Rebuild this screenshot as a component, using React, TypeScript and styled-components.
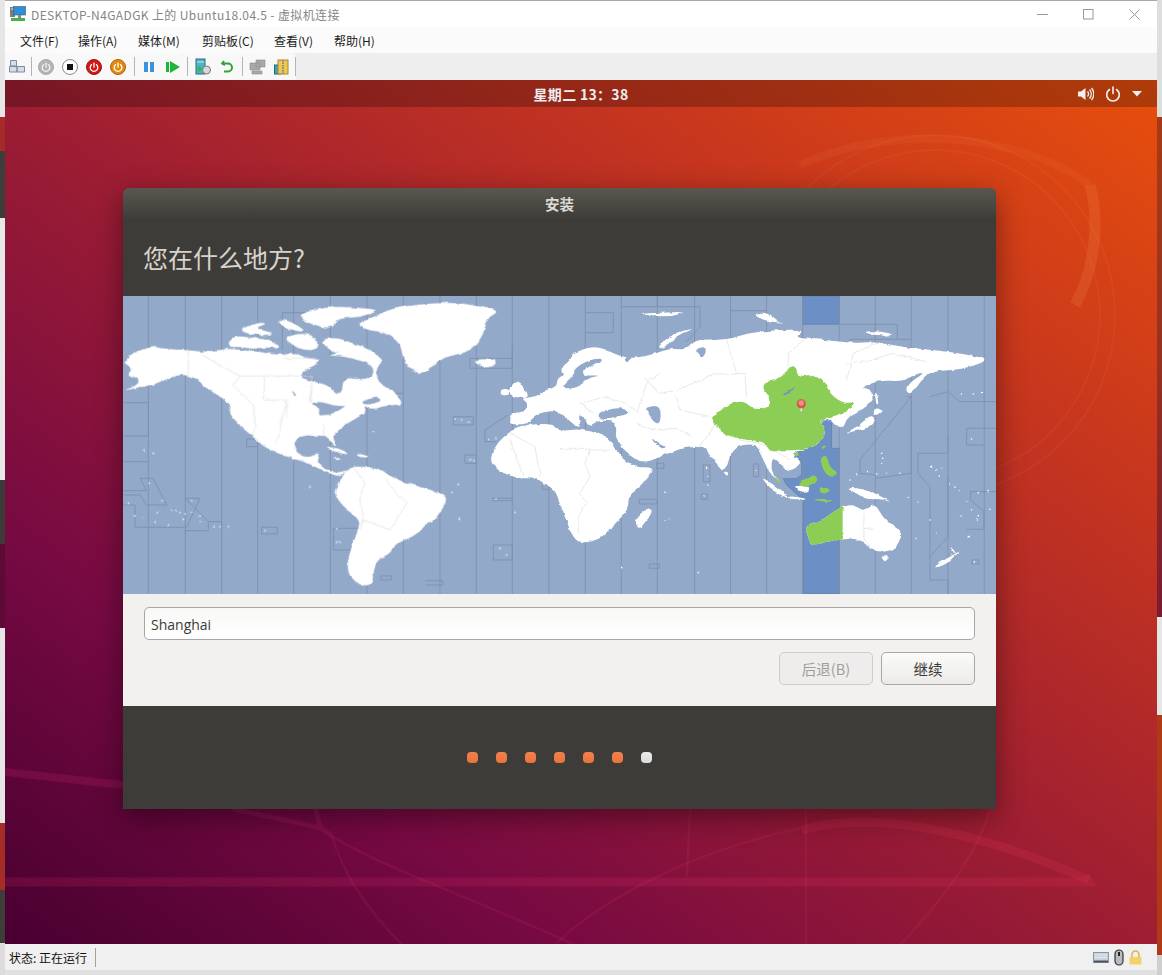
import React from "react";
import styled, { createGlobalStyle } from "styled-components";

const CJK = `"Noto Sans CJK SC", "Noto Sans", sans-serif`;

const GlobalStyle = createGlobalStyle`
  html, body { margin: 0; padding: 0; background: #e4e4e4; }
  body { font-family: ${CJK}; overflow: hidden; }
  * { box-sizing: border-box; }
`;

const Page = styled.div`
  display: grid;
  grid-template-columns: 5px 1fr 5px;
  width: 1162px;
  height: 975px;
`;

const Strip = styled.div`
  display: flex;
  flex-direction: column;
`;

const StripPart = styled.div<{ $h: number; $bg: string }>`
  flex: ${({ $h }) => ($h ? `0 0 ${$h}px` : "1")};
  background: ${({ $bg }) => $bg};
`;

const Main = styled.div`
  display: flex;
  flex-direction: column;
  min-width: 0;
`;

// host window chrome
const TitleBar = styled.div`
  height: 27px;
  background: #fff;
  border-top: 1px solid #a8a8a8;
  display: flex;
  align-items: center;
  padding-left: 5px;
  gap: 5px;
`;

const TitleText = styled.span`
  font-size: 12px;
  letter-spacing: 0.38px;
  color: #858585;
  flex: 1;
  white-space: pre;
`;

const WinButtons = styled.div`
  display: flex;
  height: 100%;
`;

const WinButton = styled.div`
  width: 46px;
  display: flex;
  align-items: center;
  justify-content: center;
  margin-top: 1px;
`;

const MenuBar = styled.div`
  height: 26px;
  background: #fbfbfb;
  display: grid;
  grid-template-columns: 58px 60px 64px 72px 60px auto;
  align-items: center;
  justify-content: start;
  padding-left: 15px;
  font-size: 12px;
  color: #1a1a1a;
`;

const ToolBar = styled.div`
  height: 27px;
  background: #eeeeee;
`;

const ToolGroup = styled.div`
  display: inline-flex;
  align-items: center;
  height: 27px;
  width: 291px;
  background: #f8f8f8;
  border-radius: 0 4px 0 0;
`;

const ToolIcon = styled.div<{ $w?: number }>`
  width: ${({ $w }) => $w ?? 24}px;
  height: 20px;
  display: flex;
  align-items: center;
  justify-content: center;
  flex: none;
`;

const ToolSep = styled.div<{ $ml?: number }>`
  width: 1px;
  height: 19px;
  background: #b4b4b4;
  margin: 0 2px 0 ${({ $ml }) => $ml ?? 2}px;
  flex: none;
`;

// guest screen
const Guest = styled.div`
  position: relative;
  flex: 1;
  display: flex;
  flex-direction: column;
  overflow: hidden;
  background: linear-gradient(to bottom left, #e84f0c 0%, #c5351f 25%, #9e1e32 50%, #770a42 76%, #480030 100%);
`;

const Wallpaper = styled.svg`
  position: absolute;
  inset: 0;
  width: 100%;
  height: 100%;
`;

const TopPanel = styled.div`
  position: relative;
  height: 27px;
  flex: none;
  background: rgba(0, 0, 0, 0.24);
  display: flex;
  align-items: center;
  justify-content: center;
  color: #eee;
  font-size: 14px;
  font-weight: 700;
  letter-spacing: 0.3px;
`;

const PanelIcons = styled.div`
  position: absolute;
  right: 15px;
  top: 0;
  height: 27px;
  display: flex;
  align-items: center;
  gap: 11px;
`;

const Desktop = styled.div`
  position: relative;
  flex: 1;
  padding: 81px 0 0 118px;
`;

const Installer = styled.div`
  width: 873px;
  height: 621px;
  border-radius: 6px 6px 0 0;
  overflow: hidden;
  display: flex;
  flex-direction: column;
  box-shadow: 0 8px 28px rgba(0, 0, 0, 0.42);
  background: #3e3c38;
`;

const InstallerTitle = styled.div`
  height: 30px;
  flex: none;
  background: linear-gradient(#5a5750, #3f3d39);
  color: #dedbd5;
  font-size: 14.5px;
  font-weight: 700;
  display: flex;
  align-items: center;
  justify-content: center;
`;

const Heading = styled.div`
  height: 78px;
  flex: none;
  padding-left: 20px;
  display: flex;
  align-items: center;
  color: #d6d3cc;
  font-size: 25px;
`;

const MapSvg = styled.svg`
  display: block;
  width: 873px;
  height: 298px;
  flex: none;
`;

const FormArea = styled.div`
  height: 112px;
  flex: none;
  background: #f2f1ef;
  padding: 13px 21px 0;
  display: flex;
  flex-direction: column;
  gap: 12px;
`;

const CityInput = styled.div`
  height: 33px;
  border: 1px solid #a9a7a2;
  border-radius: 5px;
  background: linear-gradient(#f8f8f7, #ffffff);
  display: flex;
  align-items: center;
  padding: 1px 0 0 6px;
  font-family: "Open Sans", "Noto Sans", sans-serif;
  font-size: 14px;
  color: #3c3b37;
`;

const ButtonRow = styled.div`
  display: flex;
  justify-content: flex-end;
  gap: 8px;
`;

const DialogButton = styled.div<{ $disabled?: boolean }>`
  width: 94px;
  height: 33px;
  border-radius: 5px;
  display: flex;
  align-items: center;
  justify-content: center;
  font-size: 14.5px;
  border: 1px solid ${({ $disabled }) => ($disabled ? "#cfcdc9" : "#a9a7a2")};
  color: ${({ $disabled }) => ($disabled ? "#a09e9a" : "#3c3b37")};
  background: ${({ $disabled }) =>
    $disabled ? "#eeedeb" : "linear-gradient(#fbfbfa, #ebeae8)"};
`;

const Footer = styled.div`
  flex: 1;
  display: flex;
  align-items: center;
  justify-content: center;
  gap: 18px;
  background: #3e3c38;
`;

const Dot = styled.div<{ $active?: boolean }>`
  width: 11px;
  height: 11px;
  border-radius: 4px;
  background: ${({ $active }) =>
    $active ? "linear-gradient(#ececec, #dcdcdc)" : "linear-gradient(#f0824f, #ec7239)"};
`;

const StatusBar = styled.div`
  height: 26px;
  flex: none;
  background: #f0f0f0;
  display: flex;
  align-items: center;
  padding-left: 4px;
  font-size: 12px;
  color: #111;
`;

const StatusCell = styled.div`
  width: 87px;
  height: 19px;
  display: flex;
  align-items: center;
  border-right: 1px solid #a0a0a0;
`;

const StatusIcons = styled.div`
  margin-left: auto;
  margin-right: 15px;
  display: flex;
  align-items: center;
  gap: 5px;
`;

const BottomEdge = styled.div`
  height: 5px;
  flex: none;
  background: #e0e0e0;
`;

const leftStrip: [number, string][] = [
  [117, "#e6e6e6"],
  [34, "#a62b28"],
  [67, "#3f3d39"],
  [262, "#e8e8e8"],
  [64, "#3d3b37"],
  [84, "#5d0a36"],
  [195, "#e6e6e6"],
  [67, "#a62d26"],
  [53, "#3f3d39"],
  [0, "#dcdcdc"],
];

const rightStrip: [number, string][] = [
  [117, "#dedede"],
  [250, "linear-gradient(#a63a17, #963021)"],
  [250, "linear-gradient(#963021, #7a1a30)"],
  [98, "#e6e6e6"],
  [240, "#b03a18"],
  [0, "#cfcfcf"],
];

// rounds a traced polygon, points become control points of quadratic curves
const smooth = (d: string) =>
  d
    .split("Z")
    .filter((s) => s.trim())
    .map((sub) => {
      const n = (sub.match(/-?\d+(\.\d+)?/g) ?? []).map(Number);
      const pts: [number, number][] = [];
      for (let i = 0; i + 1 < n.length; i += 2) pts.push([n[i], n[i + 1]]);
      const mid = (a: [number, number], b: [number, number]) =>
        `${(a[0] + b[0]) / 2} ${(a[1] + b[1]) / 2}`;
      let out = `M${mid(pts[pts.length - 1], pts[0])}`;
      pts.forEach((p, i) => {
        out += `Q${p[0]} ${p[1]} ${mid(p, pts[(i + 1) % pts.length])}`;
      });
      return out + "Z";
    })
    .join("");

const newWorld = [
  "M18 212L30 195L90 168L140 178L205 180L245 186L300 180L330 175L370 182L420 185L470 195L530 190L560 205L610 210L640 190L720 175L770 200L790 208L770 235L765 258L790 290L825 305L835 322L850 345L800 345L760 360L730 345L740 365L710 385L680 400L645 430L638 440L650 470L638 465L625 440L590 435L540 438L520 460L530 490L570 505L590 485L600 495L590 518L620 540L650 550L685 538L660 560L625 550L590 532L545 512L500 502L465 485L430 470L400 440L375 420L350 400L326 365L335 345L300 320L260 295L230 265L200 255L170 255L100 285L40 295L10 305L60 280L50 262L20 255L40 235L12 220Z",
  "M320 172L340 135L400 145L460 150L485 178L440 170L400 178L360 170Z",
  "M350 122L410 98L445 100L400 115L470 130L420 138Z",
  "M465 88L510 92L565 128L500 118Z",
  "M530 75L620 50L700 52L785 60L720 82L650 85L640 112L600 112L555 92Z",
  "M600 150L650 142L700 160L750 178L790 210L750 218L700 192L650 192L620 172Z",
  "M490 145L540 128L592 140L592 182L540 178L520 165Z",
  "M610 470L650 473L692 494L655 490ZM705 490L755 500L720 504ZM640 500L672 505L650 512Z",
  "M705 100L760 85L800 60L880 45L1000 36L1070 48L1142 62L1100 85L1092 130L1062 175L1020 192L960 205L910 258L875 238L850 215L845 175L830 150L790 125L740 120Z",
  "M1056 212L1090 206L1132 212L1120 230L1090 233Z",
  "M678 540L710 528L780 536L820 565L880 585L978 613L978 640L945 690L920 700L890 735L820 765L812 790L770 810L760 850L755 890L700 880L678 830L698 760L715 720L720 690L680 660L642 615L648 590L665 565Z",
];

const newWorldWater = [
  "M545 255L560 235L590 225L600 200L640 195L700 205L760 225L760 262L720 268L672 262L665 308L650 316L625 285L580 275L548 265Z",
  "M568 340L600 333L650 350L685 343L640 372L610 376L595 376L600 352Z",
  "M512 298L530 315L525 320Z",
  "M720 335L770 320L792 330L740 347Z",
];

const australia =
  "M734 705L790 690L820 665L848 650L880 643L912 665L945 638L972 690L1028 725L1017 760L990 787L935 782L915 760L890 745L848 748L800 755L755 767L745 745Z";

const oldWorld = [
  "M-212 510L-190 460L-150 425L-120 405L-20 400L0 425L60 415L145 440L160 470L190 510L225 532L285 532L265 565L225 600L205 620L205 660L165 700L130 745L60 762L35 735L20 690L0 640L-15 600L-40 585L-70 565L-130 565L-190 540Z",
  "M270 650L278 665L250 712L228 714L228 680Z",
  "M-152 372L-105 365L-95 340L-118 325L-70 320L-40 300L-10 290L-8 265L12 255L0 240L30 205L60 178L115 168L180 200L230 205L290 190L330 175L380 180L400 155L430 148L500 150L560 130L640 120L738 118L700 145L790 148L870 160L950 155L1030 172L1130 180L1230 195L1292 210L1200 240L1105 243L1048 322L1038 285L1100 245L1060 255L1030 275L960 270L895 295L935 300L945 330L890 370L860 385L852 412L835 414L818 392L800 385L780 395L800 430L770 470L700 485L700 500L728 515L690 548L660 520L638 498L632 545L670 584L622 545L600 480L580 460L520 470L492 552L470 520L440 480L420 470L395 470L345 480L310 498L235 525L165 445L170 420L165 395L115 390L85 412L75 385L55 372L62 408L52 412L28 392L5 370L-20 362L-55 368L-75 375L-95 402L-135 404L-152 400Z",
  "M-162 310L-130 265L-88 320L-120 326ZM-178 300L-155 295L-150 316L-178 316Z",
  "M290 172L340 130L412 112L350 135L312 176Z",
  "M240 72L300 68L385 65L330 80L260 78Z",
  "M578 72L620 66L652 95L678 100L610 92Z",
  "M906 125L960 123L1008 135L950 138Z",
  "M854 430L900 405L930 375L948 385L935 410L890 422Z",
  "M943 352L972 362L940 380Z",
  "M943 298L960 330L950 354Z",
  "M602 558L650 590L692 628L660 616L625 590Z",
  "M678 616L752 628L700 633Z",
  "M703 586L750 590L745 607L710 602Z",
  "M858 590L925 600L1004 640L960 625L925 630L880 606Z",
  "M490 543L507 548L500 560Z",
  australia,
  "M958 798L992 800L975 815Z",
  "M1120 832L1165 802L1207 780L1178 802L1165 818L1135 832Z",
  "M1172 766L1192 790L1178 786Z",
];

const oldWorldWater = [
  "M112 372L170 350L218 365L160 387L120 387Z",
  "M253 352L302 345L302 402L280 397L266 370Z",
  "M5 290L30 265L45 255L40 240L75 215L110 205L132 208L95 225L65 245L75 258L125 255L80 265L60 290L25 296Z",
  "M268 438L300 465L322 470L300 480Z",
  "M190 205L218 198L205 222Z",
  "M400 178L442 168L430 208Z",
];

const utcEight = [
  "M446 388L490 350L540 331L570 345L590 360L625 352L630 320L606 295L620 272L670 262L690 226L710 232L712 260L760 253L807 285L800 300L845 340L890 336L860 365L835 372L815 385L795 382L780 395L800 430L770 470L700 482L660 480L630 487L615 455L560 450L490 435L480 415Z",
  "M783 470L802 463L790 482ZM698 488L720 490L705 502Z",
  "M783 498L802 498L802 525L832 545L827 562L800 557L783 525Z",
  "M706 585L760 553L777 570L750 592Z",
  "M773 588L814 595L790 617Z",
  "M638 553L667 582L650 577Z",
  "M748 626L832 628L800 638Z",
];

const westSpecks: [number, number][] = [
  [25, 640], [45, 678], [70, 683], [100, 490], [105, 695], [112, 668], [145, 705], [155, 660], [170, 662], [180, 668], [195, 672],
  [215, 668], [240, 678], [238, 695], [190, 688], [282, 708], [300, 710], [325, 710], [435, 722], [650, 718], [650, 757],
  [660, 757], [1005, 390], [1025, 392], [1045, 396], [1050, 510], [1062, 512], [1105, 448], [1128, 446], [1015, 583], [995, 607],
  [1018, 688], [1125, 627], [1140, 775], [1160, 795], [1188, 667], [760, 427], [570, 590], [72, 480], [88, 580], [125, 632], [212, 632],
];

const eastSpecks: [number, number][] = [
  [965, 490], [968, 505], [966, 518], [925, 545], [950, 552], [980, 550], [1020, 550], [1115, 532], [1130, 540], [1145, 535], [1138, 558],
  [1170, 580], [1185, 592], [1198, 603], [870, 570], [890, 552], [1220, 635], [1205, 678], [1235, 660], [1255, 680], [1250, 690], [1290, 658],
  [1255, 608], [1285, 605], [1205, 312], [1240, 312], [1265, 310], [1110, 690], [1228, 740], [1068, 745], [1130, 730], [1045, 622], [1075, 635],
  [315, 690], [328, 688], [440, 535], [442, 560], [444, 585], [432, 618], [315, 610], [185, 830], [415, 848], [1243, 815], [1235, 447], [588, 540],
];

const PowerGlyph = ({ color }: { color: string }) => (
  <g fill="none" stroke={color} strokeWidth="1.3" strokeLinecap="round">
    <path d="M5.6 5.6a3.8 3.8 0 1 0 4.8 0" />
    <path d="M8 4.2v4" />
  </g>
);

const RoundButton = ({ ring, fill, color }: { ring: string; fill: string; color: string }) => (
  <svg width="16" height="16" viewBox="0 0 16 16">
    <circle cx="8" cy="8" r="7.5" fill={fill} stroke={ring} />
    <PowerGlyph color={color} />
  </svg>
);

const AppIcon = () => (
  <svg width="16" height="16" viewBox="0 0 16 16">
    <rect x="0" y="1" width="5" height="10" fill="#7d7d7d" />
    <rect x="1" y="2.5" width="3" height="1" fill="#ddd" />
    <rect x="3.5" y="0.5" width="12" height="8.5" fill="#2a8fdc" stroke="#555" strokeWidth=".6" />
    <rect x="8" y="9" width="3" height="3" fill="#888" />
    <rect x="1" y="12" width="14" height="3" fill="#46b04a" />
  </svg>
);

const WorldMap = () => {
  // traced from 3x crops, hence the scale group; the second half sits 1320 units right
  const zones = [85, 196, 305, 413, 521, 631, 741, 850, 960, 1069, 1177, 1287, 1396, 1504, 1612, 1724, 1832, 1940, 2048, 2158, 2266, 2374, 2484, 2593];
  return (
    <MapSvg viewBox="0 0 873 298">
      <defs>
        <filter id="coast" filterUnits="userSpaceOnUse" x="-20" y="0" width="2700" height="930" colorInterpolationFilters="sRGB">
          <feTurbulence type="fractalNoise" baseFrequency="0.045" numOctaves="3" seed="4" result="n" />
          <feDisplacementMap in="SourceGraphic" in2="n" scale="10" xChannelSelector="R" yChannelSelector="G" />
        </filter>
        <clipPath id="west-australia">
          <rect x="700" y="600" width="148" height="200" />
        </clipPath>
      </defs>
      <rect width="873" height="298" fill="#93a9c9" />
      <g transform="translate(-3 -6) scale(0.3333)">
        <g transform="translate(1320 0)" fill="#6c90c5" stroke="#5f7ca8" strokeWidth="2">
          <path d="M728 18H838V103H728Z" />
          <path d="M815 380V475H838V912H730V630L680 585L670 566L708 566L725 555V515L700 500V470Z" />
        </g>
        <g stroke="#7f90ac" strokeWidth="2.6" fill="none">
          {zones.map((x) => (
            <path key={x} d={`M${x} 18V912`} />
          ))}
          <path d="M10 338H85V438H10M10 515H85M10 602H80L60 565H100L140 645H80L60 615H10M10 645H45V712H110H200L240 625H196V625L265 695V722H196V732M265 695H305V722" />
          <path d="M380 447H413V470H380ZM425 712H472V732H425ZM640 715H716L700 780H640ZM782 858H814V870H782ZM916 872H968V885H916M1000 380H1060V405H1000ZM1035 495H1069V520H1035ZM1095 420L1165 375M1095 420V455H1130M1118 625H1177V632H1118ZM1120 765H1177V810H1120ZM1267 585H1287V598H1267Z" />
          <path d="M487 68H631M487 68V180M1050 205H1177V235H1050ZM1177 168V205M850 310H830" />
          <g transform="translate(1320 0)">
            <path d="M76 68H160V128H76M184 50H292V18M292 50H404M404 50H420V110L380 155M512 62H620M838 103H946V125M946 103H1012V148H870V160M1012 148H1054M1110 320L1164 305L1200 335H1308M1040 320H1054L900 510V550L946 555M1054 320V550L946 565M1074 490H1164V435M1074 490V550L1110 590V800L1164 740V560M1220 415H1308M1220 415V465H1270M1232 605H1308M1232 605V630L1272 665V718H1220M1110 800V870H1164V912" />
            <path d="M238 628H292V642H238ZM268 822H298V835H268ZM430 525H450V575H430ZM580 522H596V560H580ZM424 612H442V628H424ZM1236 810H1256V822H1236ZM290 520H312V535H290Z" />
          </g>
        </g>

        <g filter="url(#coast)">
          <g fill="#fff">
            {newWorld.map((d) => (
              <path key={d} d={smooth(d)} />
            ))}
            {westSpecks.map(([x, y]) => (
              <circle key={`${x}-${y}`} cx={x} cy={y} r="2.4" />
            ))}
          </g>
          <g fill="#93a9c9">
            {newWorldWater.map((d) => (
              <path key={d} d={smooth(d)} />
            ))}
          </g>
          <g fill="none" stroke="#dcdcdc" strokeWidth="2">
            <path d="M205 180V255M240 190L290 220L360 258H433V330H500L470 460M360 258L340 285L400 345L405 400L400 440M490 205H585V210M433 258H575V335M575 300L570 340M500 340L500 380M610 400V440M700 532L735 580L720 620L730 690L810 720L860 640L805 580L800 565M730 690L720 720" />
          </g>

          <g transform="translate(1320 0)">
            <g fill="#fff">
              {oldWorld.map((d) => (
                <path key={d} d={smooth(d)} />
              ))}
              {eastSpecks.map(([x, y]) => (
                <circle key={`${x}-${y}`} cx={x} cy={y} r="2.4" />
              ))}
            </g>
            <g fill="#93a9c9">
              {oldWorldWater.map((d) => (
                <path key={d} d={smooth(d)} />
              ))}
            </g>
            <g fill="none" stroke="#dcdcdc" strokeWidth="2">
              <path d="M0 475H90L75 520L90 560L60 610L80 640L55 680L55 730M90 480L150 480M-150 430L-75 470L-60 560M-150 450L-110 560M70 340L130 320L200 340L230 370L260 280L300 250M250 260L300 310L350 300L460 255L555 250L560 320M350 320L360 360L450 380M230 400L280 420L350 415L395 440M60 340L100 370M540 450L600 460L640 480L690 510M685 230V190L730 150M860 270L880 190L950 160M860 220L930 210L1000 190L1100 215M500 150L530 250M420 470L470 400" />
              <path d="M912 670V745L935 780M912 715H940" />
            </g>
            <g fill="#8ccd55">
              {utcEight.map((d) => (
                <path key={d} d={smooth(d)} />
              ))}
              <path d={smooth(australia)} clipPath="url(#west-australia)" />
            </g>
            <path d="M668 314L705 290L700 298L675 316Z" fill="#6c90c5" />
          </g>
        </g>

        <g transform="translate(1320 0)">
          <path d="M724 350V364" stroke="#e8e8e8" strokeWidth="5" />
          <circle cx="724" cy="341" r="13" fill="#d93a3a" />
          <circle cx="724" cy="339" r="9" fill="#f48a8a" />
        </g>
      </g>
    </MapSvg>
  );
};

export default function App() {
  return (
    <>
      <GlobalStyle />
      <Page>
        <Strip>
          {leftStrip.map(([h, bg], i) => (
            <StripPart key={i} $h={h} $bg={bg} />
          ))}
        </Strip>
        <Main>
          <TitleBar>
            <AppIcon />
            <TitleText>DESKTOP-N4GADGK 上的 Ubuntu18.04.5 - 虚拟机连接</TitleText>
            <WinButtons>
              <WinButton>
                <svg width="11" height="11"><path d="M0 5.5H11" stroke="#999" /></svg>
              </WinButton>
              <WinButton>
                <svg width="11" height="11"><rect x=".5" y=".5" width="9.5" height="9.5" fill="none" stroke="#999" /></svg>
              </WinButton>
              <WinButton>
                <svg width="11" height="11"><path d="M.5 .5L10.5 10.5M10.5 .5L.5 10.5" stroke="#999" /></svg>
              </WinButton>
            </WinButtons>
          </TitleBar>
          <MenuBar>
            <span>文件(F)</span>
            <span>操作(A)</span>
            <span>媒体(M)</span>
            <span>剪贴板(C)</span>
            <span>查看(V)</span>
            <span>帮助(H)</span>
          </MenuBar>
          <ToolBar>
            <ToolGroup>
              <ToolIcon>
                <svg width="16" height="13" viewBox="0 0 16 13">
                  <path d="M1.500 .5h6v5.500h-6zM.5 6.500h7.500v5.500h-7.500zM8 6.500h7.500v5.500h-7.500z" fill="#d5dde8" stroke="#7d8ba0" />
                </svg>
              </ToolIcon>
              <ToolSep />
              <ToolIcon><RoundButton ring="#a8a8a8" fill="#b4b4b4" color="#f2f2f2" /></ToolIcon>
              <ToolIcon>
                <svg width="16" height="16" viewBox="0 0 16 16">
                  <circle cx="8" cy="8" r="7.500" fill="#fff" stroke="#8a8a8a" />
                  <rect x="5" y="5" width="6" height="6" fill="#111" />
                </svg>
              </ToolIcon>
              <ToolIcon><RoundButton ring="#a01010" fill="#d01818" color="#fff" /></ToolIcon>
              <ToolIcon><RoundButton ring="#b06000" fill="#e58a10" color="#fff" /></ToolIcon>
              <ToolSep $ml={4} />
              <ToolIcon>
                <svg width="12" height="12" viewBox="0 0 12 12"><path d="M1 1h4v10H1zM7 1h4v10H7z" fill="#3a93dd" /></svg>
              </ToolIcon>
              <ToolIcon>
                <svg width="14" height="12" viewBox="0 0 14 12"><path d="M0 1h3v10H0zM4 0l10 6-10 6z" fill="#1eb53a" /></svg>
              </ToolIcon>
              <ToolSep />
              <ToolIcon $w={26}>
                <svg width="16" height="17" viewBox="0 0 16 17">
                  <rect x="1" y="1" width="9" height="15" fill="#4db3c8" stroke="#2a6c80" />
                  <path d="M2 4h7" stroke="#cfeaf0" />
                  <path d="M3 8l5 3-5 3z" fill="#35b545" />
                  <circle cx="11.500" cy="12" r="4" fill="#d8d8d8" stroke="#777" />
                </svg>
              </ToolIcon>
              <ToolIcon $w={22}>
                <svg width="12" height="13" viewBox="0 0 12 13" fill="none">
                  <path d="M3 1L1 3.500L4 5M1.500 3.500H7a3.500 3.500 0 0 1 0 8H3" stroke="#2fa535" strokeWidth="2" />
                </svg>
              </ToolIcon>
              <ToolSep $ml={4} />
              <ToolIcon>
                <svg width="17" height="16" viewBox="0 0 17 16">
                  <path d="M1 4h10v7H1zM7 1h9v7H7zM3 12h10v3H3z" fill="#a9a9a9" stroke="#8a8a8a" strokeWidth=".6" />
                </svg>
              </ToolIcon>
              <ToolIcon>
                <svg width="15" height="16" viewBox="0 0 15 16">
                  <rect x="0.500" y="6" width="6" height="9" fill="#3da4b8" stroke="#1f6b7d" />
                  <rect x="4" y="1" width="10" height="14" fill="#f0c850" stroke="#a88a30" />
                  <path d="M9 1v14" stroke="#888" strokeWidth="2" strokeDasharray="1.500 1" />
                </svg>
              </ToolIcon>
              <ToolSep />
            </ToolGroup>
          </ToolBar>
          <Guest>
            <Wallpaper viewBox="0 0 1152 864" fill="none">
              <g stroke="#ffffff" strokeOpacity="0.04" strokeWidth="2">
                <circle cx="930" cy="235" r="180" />
                <circle cx="930" cy="235" r="165" />
              </g>
              <path d="M1085 105C1095 140 1090 190 1070 225" stroke="#ff9a60" strokeOpacity="0.16" strokeWidth="11" />
              <path d="M795 85C880 45 1010 50 1085 105" stroke="#ff9a60" strokeOpacity="0.08" strokeWidth="8" />
              <path d="M0 692L118 705" stroke="#ff3890" strokeOpacity="0.14" strokeWidth="8" />
              <path d="M228 729L316 748L310 729M316 748L327 756" stroke="#ff3890" strokeOpacity="0.12" strokeWidth="5" />
              <path d="M0 802H1084L1080 796" stroke="#ff3878" strokeOpacity="0.14" strokeWidth="9" />
              <path d="M797 750C860 732 960 745 1084 800" stroke="#ff4060" strokeOpacity="0.14" strokeWidth="9" />
              <g stroke="#ff4878" strokeOpacity="0.1" strokeWidth="2.500">
                <path d="M327 756C340 800 370 840 408 875" />
                <path d="M327 756C380 790 500 830 591 875" />
                <path d="M540 875C590 820 690 770 797 748" />
                <path d="M801 729V875" />
                <path d="M685 729L682 797" />
                <path d="M985 730C970 780 930 830 885 875" />
              </g>
            </Wallpaper>
            <TopPanel>
              星期二 13：38
              <PanelIcons>
                <svg width="17" height="16" viewBox="0 0 17 16" fill="none">
                  <path d="M1 5.500h3L8.500 2v12L4 10.500H1z" fill="#f0f0f0" />
                  <path d="M10.500 5.500a3.500 3.500 0 0 1 0 5M12.500 3.500a6.500 6.500 0 0 1 0 9M14.500 2a9 9 0 0 1 0 12" stroke="#f0f0f0" strokeWidth="1.300" />
                </svg>
                <svg width="16" height="16" viewBox="0 0 16 16" fill="none" stroke="#f0f0f0" strokeWidth="1.600" strokeLinecap="round">
                  <path d="M4.500 3.500a6.300 6.300 0 1 0 7 0" />
                  <path d="M8 1v6.500" />
                </svg>
                <svg width="10" height="6" viewBox="0 0 10 6"><path d="M0 0h10L5 5.500z" fill="#f0f0f0" /></svg>
              </PanelIcons>
            </TopPanel>
            <Desktop>
              <Installer>
                <InstallerTitle>安装</InstallerTitle>
                <Heading>您在什么地方?</Heading>
                <WorldMap />
                <FormArea>
                  <CityInput>Shanghai</CityInput>
                  <ButtonRow>
                    <DialogButton $disabled>后退(B)</DialogButton>
                    <DialogButton>继续</DialogButton>
                  </ButtonRow>
                </FormArea>
                <Footer>
                  {[0, 1, 2, 3, 4, 5, 6].map((i) => (
                    <Dot key={i} $active={i === 6} />
                  ))}
                </Footer>
              </Installer>
            </Desktop>
          </Guest>
          <StatusBar>
            <StatusCell>状态: 正在运行</StatusCell>
            <StatusIcons>
              <svg width="16" height="11" viewBox="0 0 16 11">
                <rect x=".5" y=".5" width="15" height="10" fill="#c8d2dc" stroke="#8a96a4" />
                <path d="M2 3h12M2 5.500h12" stroke="#f2f5f8" strokeDasharray="1.500 .7" />
                <rect x="1" y="8.500" width="14" height="2" fill="#4a5560" />
              </svg>
              <svg width="10" height="17" viewBox="0 0 10 17">
                <rect x="1" y="1" width="8" height="15" rx="4" fill="#b8bcc0" stroke="#333" strokeWidth="1.200" />
                <path d="M5 3v4" stroke="#222" strokeWidth="2" />
              </svg>
              <svg width="13" height="15" viewBox="0 0 13 15">
                <path d="M3 7V4.500a3.500 3.500 0 0 1 7 0V7" fill="none" stroke="#d9b64a" strokeWidth="1.600" />
                <rect x="0.500" y="7" width="12" height="7.500" fill="#f5cf68" />
              </svg>
            </StatusIcons>
          </StatusBar>
          <BottomEdge />
        </Main>
        <Strip>
          {rightStrip.map(([h, bg], i) => (
            <StripPart key={i} $h={h} $bg={bg} />
          ))}
        </Strip>
      </Page>
    </>
  );
}
